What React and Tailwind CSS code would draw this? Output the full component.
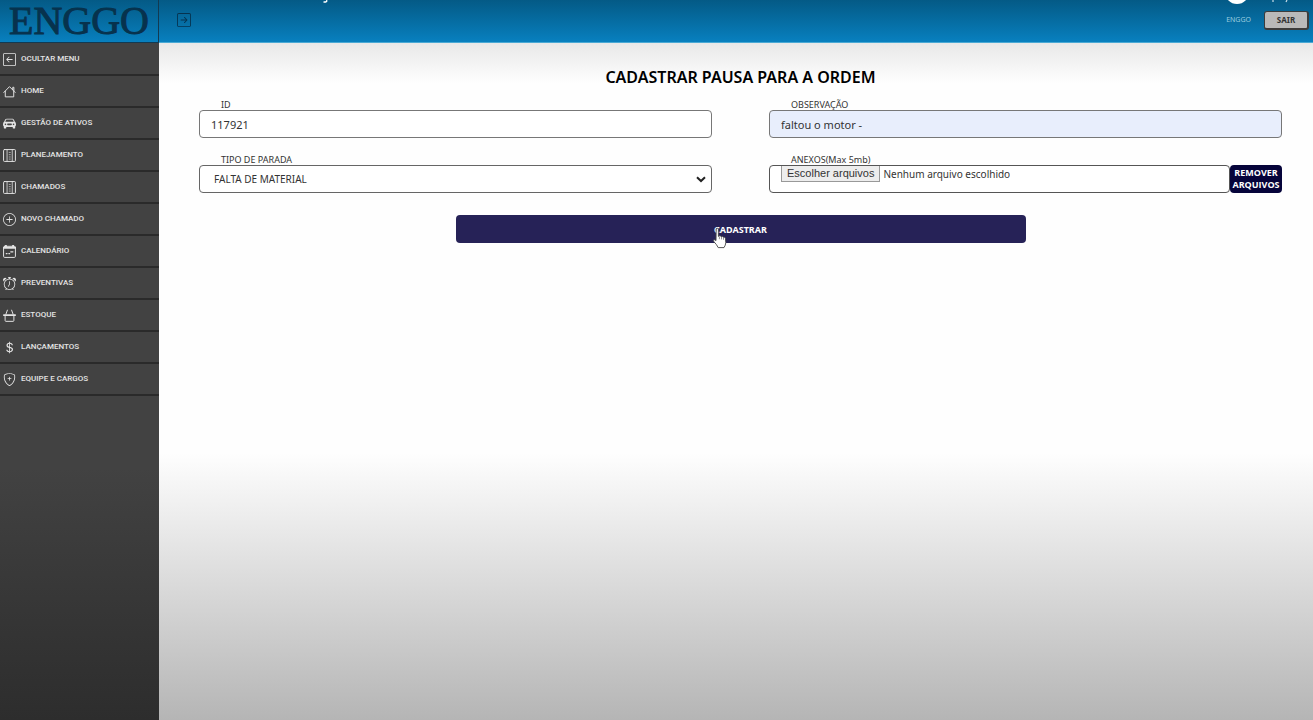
import {
  BsArrowLeftSquare,
  BsArrowRightSquare,
  BsCarFrontFill,
  BsPlusCircle,
  BsCurrencyDollar,
  BsShieldPlus,
  BsAlarm,
} from "react-icons/bs";

function Drawing({ size, children }) {
  return (
    <svg width={size} height={size} viewBox="0 0 16 16" fill="none" stroke="currentColor" strokeWidth="1.2" strokeLinecap="round" strokeLinejoin="round" aria-hidden="true">
      {children}
    </svg>
  );
}

function HouseIcon({ size }) {
  return (
    <Drawing size={size}>
      <path d="M1 9.2 8 2l7 7.2M2.8 7.6v7h10.4v-7M12 5.6V2.8h1.4V7" />
    </Drawing>
  );
}

function ColumnsIcon({ size }) {
  return (
    <Drawing size={size}>
      <rect x="0.7" y="0.7" width="14.6" height="14.6" rx="1" />
      <path d="M5 1v14M11.4 1v14" strokeWidth="1" />
      <path d="M7.6 4.2h1.4M7.6 7h1.4M7.6 9.8h1.4M7.6 12.4h1.4" strokeWidth="0.8" />
    </Drawing>
  );
}

function CalendarIcon({ size }) {
  return (
    <Drawing size={size}>
      <rect x="0.7" y="1.6" width="14.6" height="13.7" rx="1.4" />
      <path d="M1 3.4h14M3.6 1v1M12.4 1v1" strokeWidth="2.4" />
      <path d="M4 10.6h1M7.2 10.6h1M9.6 8.4h2.6" strokeWidth="1.5" />
    </Drawing>
  );
}

function BasketIcon({ size }) {
  return (
    <Drawing size={size}>
      <path d="M5.4 1.4 3.6 6.4M10.6 1.4l1.8 5M2.6 9v5.2q0 1 1 1h8.8q1 0 1-1V9" />
      <path d="M1 7.6h14" strokeWidth="2" />
    </Drawing>
  );
}

const items = [
  ["OCULTAR MENU", BsArrowLeftSquare],
  ["HOME", HouseIcon],
  ["GESTÃO DE ATIVOS", BsCarFrontFill],
  ["PLANEJAMENTO", ColumnsIcon],
  ["CHAMADOS", ColumnsIcon],
  ["NOVO CHAMADO", BsPlusCircle],
  ["CALENDÁRIO", CalendarIcon],
  ["PREVENTIVAS", BsAlarm],
  ["ESTOQUE", BasketIcon],
  ["LANÇAMENTOS", BsCurrencyDollar],
  ["EQUIPE E CARGOS", BsShieldPlus],
];

function Field({ id, label, children }) {
  return (
    <div className="flex min-w-0 flex-col">
      <label htmlFor={id} className="h-3 self-start pl-[22px] text-[9px] leading-[14px] whitespace-nowrap text-[#333]">
        {label}
      </label>
      {children}
    </div>
  );
}

function HandPointer() {
  return (
    <svg className="pointer-events-none absolute top-3 left-[calc(50%-29px)]" width="16" height="23" viewBox="0 0 16 23" aria-hidden="true">
      <path
        d="M4.2 1.6q1.4-1 2.2.6v7.2l1-.6q1.2-.4 1.6.8 1.5-.8 2 .6 2-.6 2.4 1.2l.4 4.2q-.2 2.6-1.8 5H6.2Q4.8 17.6 2 14.8.8 13.4 1.8 12.8q1-.4 2.2.8Z"
        fill="#fff"
        stroke="#444"
        strokeWidth="0.9"
      />
      <path d="M7.4 9.6v2.6M9.5 10v2.4M11.5 10.8v2" stroke="#666" strokeWidth="0.7" />
    </svg>
  );
}

export default function App() {
  return (
    <div className="relative flex min-h-screen font-['Noto_Sans','Open_Sans',sans-serif]">
      <aside className="flex w-[159px] shrink-0 flex-col bg-linear-to-b from-[#424242] from-65% to-[#2d2d2d]">
        <div className="flex h-[43px] justify-center border-r border-b border-[#123a52] bg-linear-to-b from-[#045a86] to-[#0880bf] font-['Liberation_Serif',serif] text-[40px] leading-[42px] text-[#07324d] [-webkit-text-stroke:1px_#07324d]">
          <span>ENGGO</span>
        </div>
        <nav className="pt-px">
          {items.map(([name, Icon]) => (
            <a key={name} href="#" className="flex h-8 items-center gap-[5px] border-b-2 border-[#2a2a2a] pl-[3px] font-['Roboto',sans-serif] text-[8px] font-medium text-[#e4e4e4]">
              <Icon size={13} />
              {name}
            </a>
          ))}
        </nav>
      </aside>
      <div className="flex min-w-0 flex-1 flex-col">
        <header className="flex h-[43px] items-center justify-between border-b border-[#4aa9d4] bg-linear-to-b from-[#045a86] to-[#0880bf] pr-1 pb-[2px] pl-[18px]">
          <button type="button" aria-label="Abrir menu" className="text-[#06334f]">
            <BsArrowRightSquare size={14} />
          </button>
          <div className="flex items-center gap-[13px]">
            <span className="text-[7px] text-[#9accdf]">ENGGO</span>
            <button type="button" className="h-[19px] w-[45px] rounded-[3px] border border-r-2 border-b-2 border-[#3c3c3c] bg-[#b9b9b9] text-[8px] leading-none font-bold text-[#333]">
              SAIR
            </button>
          </div>
        </header>
        <main className="flex-1 bg-[linear-gradient(to_bottom,#e8e8e8_0px,#fefefe_40px,#fefefe_410px,#b5b5b5_100%)] pr-[31px] pl-10">
          <h1 className="pt-[22px] text-center text-[16px] leading-6 font-semibold text-black">CADASTRAR PAUSA PARA A ORDEM</h1>
          <form className="mt-[9px]" onSubmit={(e) => e.preventDefault()}>
            <div className="grid grid-cols-2 gap-x-[57px] gap-y-[15px]">
              <Field id="ordem" label="ID">
                <input id="ordem" defaultValue="117921" className="h-7 w-full rounded border border-[#777] bg-white px-[11px] text-[11px] text-[#333]" />
              </Field>
              <Field id="obs" label="OBSERVAÇÃO">
                <input id="obs" defaultValue="faltou o motor -" className="h-7 w-full rounded border border-[#777] bg-[#e8eefc] px-[11px] text-[11px] text-[#333]" />
              </Field>
              <Field id="tipo" label="TIPO DE PARADA">
                <div className="relative">
                  <select id="tipo" className="block h-7 w-full appearance-none rounded border border-[#666] bg-white px-[14px] text-[10px] text-[#333]">
                    <option>FALTA DE MATERIAL</option>
                  </select>
                  <svg className="pointer-events-none absolute top-[11px] right-[6px]" width="10" height="7" viewBox="0 0 10 7" fill="none" stroke="#222" strokeWidth="2" aria-hidden="true">
                    <path d="M1 1.2 5 5l4-3.8" />
                  </svg>
                </div>
              </Field>
              <Field id="anexos" label="ANEXOS(Max 5mb)">
                <div className="flex">
                  <div className="relative flex h-7 min-w-0 flex-1 items-start gap-[3px] rounded border border-[#555] bg-white pl-[11px] text-[10px] text-[#333]">
                    <input id="anexos" type="file" multiple className="absolute inset-0 opacity-0" />
                    <span className="flex h-4 shrink-0 items-center border border-t-0 border-[#999] bg-[#ededed] px-[5px] font-['Liberation_Sans',sans-serif] text-[11px] leading-none whitespace-nowrap text-[#333]">
                      Escolher arquivos
                    </span>
                    <span className="truncate leading-4">Nenhum arquivo escolhido</span>
                  </div>
                  <button type="button" className="h-7 w-[52px] rounded bg-[#06043a] text-center font-['Open_Sans',sans-serif] text-[9px] leading-3 font-bold text-white">
                    REMOVER ARQUIVOS
                  </button>
                </div>
              </Field>
            </div>
            <div className="relative mt-[22px] flex justify-center">
              <button type="submit" className="h-7 w-[570px] max-w-full rounded bg-[#262257] pt-px text-[9px] font-bold text-white">
                CADASTRAR
              </button>
              <HandPointer />
            </div>
          </form>
        </main>
      </div>
      <svg className="pointer-events-none absolute top-0 left-[320px]" width="10" height="4" viewBox="0 0 10 4" fill="none" stroke="#fff" strokeWidth="1.3" aria-hidden="true">
        <path d="M6.5 0q1.2 2.2-3 2" />
      </svg>
      <svg className="pointer-events-none absolute top-0 right-[24px]" width="64" height="5" viewBox="0 0 64 5" aria-hidden="true">
        <circle cx="12" cy="-8" r="12" fill="#fff" />
        <path d="M48 0v2M62 0l-1 2" stroke="#c8dde8" strokeWidth="1.2" />
      </svg>
    </div>
  );
}
